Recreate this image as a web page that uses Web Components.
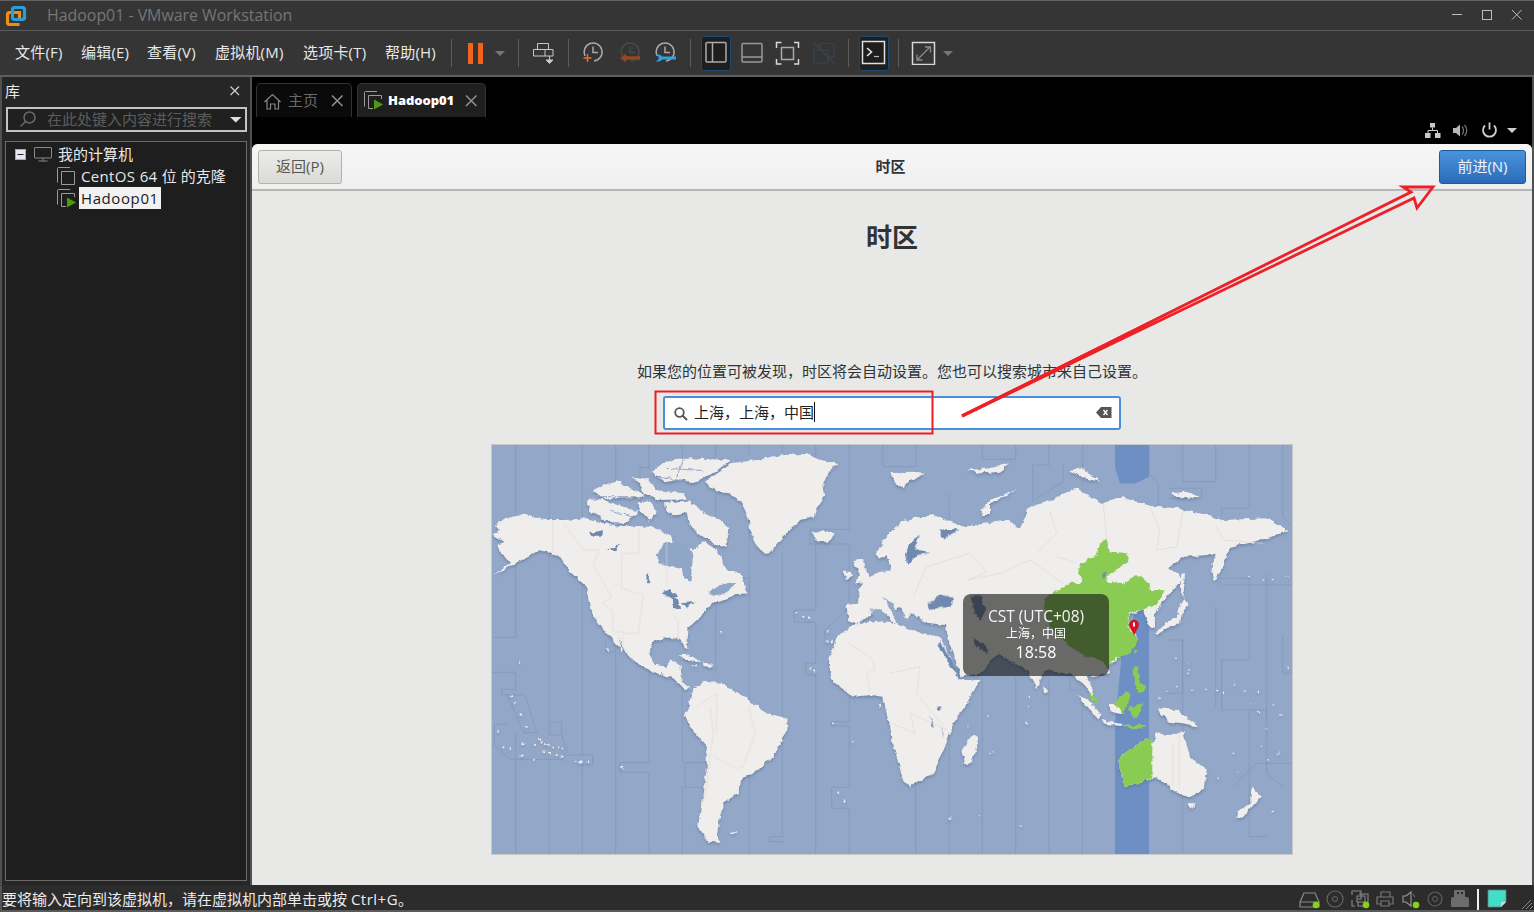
<!DOCTYPE html>
<html lang="zh"><head><meta charset="utf-8"><title>Hadoop01 - VMware Workstation</title>
<style>
html,body{margin:0;padding:0;background:#353535;overflow:hidden;width:1534px;height:912px}
body{font-family:"Open Sans","Noto Sans CJK SC",sans-serif}
</style></head><body>
<vm-window></vm-window>
<script>
const UI='"Open Sans","Noto Sans CJK SC",sans-serif';
const ico=(x,y,w,h,c)=>`<svg width="${w}" height="${h}" viewBox="${x} ${y} ${w} ${h}" fill="none">${c}</svg>`;
class Base extends HTMLElement{
  constructor(){super();this.attachShadow({mode:'open'}).innerHTML=`<style>${this.css()}</style>${this.html()}`;}
  css(){return ':host{display:block}'} html(){return ''}
}
class VmWindow extends Base{
  css(){return `:host{display:flex;flex-direction:column;position:relative;width:1534px;height:912px;background:#353535;overflow:hidden}
  .main{flex:1;display:flex;min-height:0;background:#505050;padding:0 2px 0 2px;gap:2px}
  .right{flex:1;display:flex;flex-direction:column;min-width:0;background:#000}
  .note{position:absolute;left:0;top:0;pointer-events:none}`}
  html(){return `<vm-titlebar></vm-titlebar><vm-toolbar></vm-toolbar>
  <div class="main"><vm-sidebar></vm-sidebar><div class="right"><vm-tabs></vm-tabs><vm-guest></vm-guest></div></div>
  <vm-statusbar></vm-statusbar>
  <svg class="note" width="1534" height="912" viewBox="0 0 1534 912" fill="none">
   <rect x="655.500" y="391.500" width="277" height="42" stroke="#ed1c24" stroke-width="2"/>
   <path d="M962 416 L1411 192 L1403 187 L1433 187 L1417 208 L1414 198 Z" stroke="#ee2027" stroke-width="2.800" stroke-linejoin="miter"/>
   <path d="M962 416 L1100 348" stroke="#ee2027" stroke-width="3.600"/>
  </svg>`}
}
class VmTitlebar extends Base{
  css(){return `:host{display:flex;align-items:center;height:29px;border-top:1px solid #636363;border-bottom:1px solid #5c5c5c;background:#353535;position:relative;flex:none}
  .logo{margin-left:5px;display:flex}.t{margin-left:20px;font:15.900px/20px ${UI};color:#767676;padding-bottom:2px}
  .c{margin-left:auto;display:flex}`}
  html(){return `<span class="logo">${ico(5,5,22,22,`
   <path d="M19.500 24.500h-10a2 2 0 0 1-2-2v-8a2 2 0 0 1 2-2H19.500V19.500" stroke="#f08c1a" stroke-width="3.200"/>
   <rect x="12.500" y="7.500" width="12" height="12" rx="2" stroke="#2a9fd6" stroke-width="3.200"/>`)}</span>
   <span class="t">Hadoop01 - VMware Workstation</span>
   <span class="c">${ico(1450,1,84,29,`
    <path d="M1452 14.500h10" stroke="#bdbdbd"/><rect x="1482.500" y="10.500" width="9" height="9" stroke="#bdbdbd"/>
    <path d="M1512 10l9.500 9.500M1521.500 10L1512 19.500" stroke="#bdbdbd"/>`)}</span>`}
}
class VmToolbar extends Base{
  css(){return `:host{display:flex;align-items:center;height:44px;background:#353535;border-bottom:2px solid #5e5e5e;flex:none;padding-left:15px;color:#e8e8e8}
  .menu{display:flex;gap:18px;width:436px;font:15px/20px ${UI};padding-bottom:3px;white-space:nowrap;letter-spacing:.2px}
  .menu span{display:block}
  .sep{width:1px;height:28px;background:#5c5c5c;flex:none}
  svg{flex:none;display:block}.hl{background:#1e1e1e;border:1px solid #1d4a70;border-radius:3px;box-sizing:border-box;height:35px;width:30px;display:flex}
  .i{display:flex;flex:none}`}
  html(){
   const clock=(cx,col)=>`<path d="M${cx-8} 56a9 9 0 1 1 9 5" stroke="${col}" stroke-width="1.500"/><path d="M${cx} 46.500v6h5" stroke="${col}" stroke-width="1.500"/>`;
   const items=[
    ['s',451],
    [466,ico(466,40,20,24,`<rect x="468" y="42" width="5" height="21" fill="#f0641e"/><rect x="478" y="42" width="5" height="21" fill="#f0641e"/>`)],
    [494,ico(494,48,12,8,`<path d="M495 50h10l-5 5z" fill="#777"/>`)],
    ['s',518],
    [532,ico(532,41,24,24,`<path d="M537.500 49v-5.500h11V49M533.500 49.500h19.500v6.500h-19.500zM545 49.500v6.500" stroke="#c8c8c8"/><path d="M549.500 56v4M546 60h7l-3.500 3.500z" stroke="#c8c8c8" fill="#c8c8c8"/>`)],
    ['s',568],
    [581,ico(581,41,24,24,clock(593,'#aaa')+`<path d="M587.500 54v8M583.500 58h8" stroke="#e8702a" stroke-width="1.500"/>`)],
    [618,ico(618,41,24,24,clock(630,'#4a4a4a')+`<path d="M625 58h15" stroke="#94481f" stroke-width="3.500"/><path d="M626 53.500v9l-6-4.500z" fill="#94481f"/>`)],
    [654,ico(654,41,24,24,clock(665,'#aaa')+`<path d="M662 58h14" stroke="#2ea3e0" stroke-width="3"/><path d="M655.500 54.500h3.500l3 1.500v4l-3 1.500h-3.500l3-2v-3z" fill="#2ea3e0"/>`)],
    ['s',690],
    [701,`<span class="hl">${ico(702,37,28,33,`<rect x="706" y="42.500" width="20" height="19.500" rx="1" stroke="#aaa" stroke-width="1.500"/><path d="M712.500 42.500V62" stroke="#aaa" stroke-width="1.500"/>`)}</span>`],
    [740,ico(740,40,24,24,`<rect x="742" y="42.500" width="20" height="18.500" rx="1" stroke="#999" stroke-width="1.500"/><path d="M742 56h20" stroke="#999" stroke-width="1.500"/>`)],
    [775,ico(775,40,25,24,`<path d="M776.500 47v-5.500h5M794 41.500h4.500V47M798.500 58v5h-4.500M781.500 63h-5v-5" stroke="#d8d8d8" stroke-width="1.500"/><rect x="781.500" y="46.500" width="12" height="12" stroke="#aaa" stroke-width="1.500"/>`)],
    [812,ico(812,40,24,24,`<path d="M820 49v-6.500h14V56h-6M814 49h14v13h-14z" stroke="#34424e" stroke-width="1.500"/><path d="M813 41l22 22" stroke="#3f4448" stroke-width="1.500"/>`)],
    ['s',848],
    [859,`<span class="hl">${ico(860,37,28,33,`<rect x="862.500" y="41.500" width="22" height="22" stroke="#e0e0e0" stroke-width="1.500"/><path d="M867 48l4.500 4-4.500 4" stroke="#e6e6e6" stroke-width="1.600"/><path d="M874 56.500h5" stroke="#bbb" stroke-width="1.200"/>`)}</span>`],
    ['s',898],
    [911,ico(911,40,25,24,`<rect x="912.500" y="41.500" width="22" height="22" stroke="#d8d8d8" stroke-width="1.500"/><path d="M917 59l13-13M925 46h5.500v5.500M917 53.500V59h5.500" stroke="#8a8a8a" stroke-width="1.300"/>`)],
    [942,ico(942,48,12,8,`<path d="M943 50h10l-5 5z" fill="#777"/>`)]
   ];
   const W={466:20,494:12,532:24,581:24,618:24,654:24,701:30,740:24,775:25,812:24,859:30,911:25,942:12};
   let pos=451,out='';
   for(const [a,b] of items){
     if(a==='s'){out+=`<span class="sep" style="margin-left:${b-pos}px"></span>`;pos=b+1;}
     else{out+=`<span class="i" style="margin-left:${a-pos}px">${b}</span>`;pos=a+W[a];}
   }
   return `<div class="menu"><span style="width:48px">文件(F)</span><span style="width:48px">编辑(E)</span><span style="width:50px">查看(V)</span><span style="width:70px">虚拟机(M)</span><span style="width:64px">选项卡(T)</span><span style="width:52px">帮助(H)</span></div>${out}`}
}
const vmIcon=(play)=>`<svg width="19" height="19" viewBox="0 0 19 19" fill="none"><path d="M.5 15.500V1.500a1 1 0 0 1 1-1H13" stroke="#9a9a9a"/><path d="M4.500 17.500V4.500H17.500V${play?8:17.5}${play?'':'H4.500'}M4.500 17.500H9" stroke="#9a9a9a"/>${play?`<path d="M10 8.500l9 5-9 5z" fill="#4f9a10"/>`:''}</svg>`;
class VmSidebar extends Base{
  css(){return `:host{display:flex;flex-direction:column;width:248px;background:#262626;flex:none;box-sizing:border-box;padding:0 0 4px 3px;color:#e8e8e8}
  .h{display:flex;align-items:center;justify-content:space-between;box-sizing:border-box;height:30px;font:15px/20px ${UI};padding:0 9px 3px 0}
  .s{display:flex;align-items:center;box-sizing:border-box;height:25px;width:241px;margin-left:1px;border:2px solid #c4c4c4;background:#202020;color:#5d5d5d;font:15px/20px ${UI};padding-left:10px}
  .s span{margin-left:9px;flex:1;padding-bottom:1px}.s svg{flex:none;margin-right:2px}
  .t{flex:1;margin:9px 0 0 0;width:242px;box-sizing:border-box;border:1px solid #6a6a6a;background:#1e1e1e;padding:1px 0 0 9px;font:15px/22px ${UI}}
  .r{display:flex;align-items:center;height:22px}
  .r svg{display:block;flex:none}.la{letter-spacing:.6px}.lb{letter-spacing:.35px}
  .sel{background:#f2f2f2;color:#1a1a1a;padding:0 2px;margin-left:3px}
  .ind{margin-left:42px;display:flex}`}
  html(){return `<div class="h"><span>库</span>${ico(229,85,12,12,`<path d="M230.500 86.500l8.500 8.500M239 86.500l-8.500 8.500" stroke="#d0d0d0" stroke-width="1.200"/>`)}</div>
  <div class="s">${ico(18,110,18,18,`<circle cx="29.500" cy="116.500" r="5.500" stroke="#6a6a6a" stroke-width="1.500"/><path d="M25.500 120.500l-5 5" stroke="#6a6a6a" stroke-width="1.500"/>`)}<span>在此处键入内容进行搜索</span>${ico(228,115,15,9,`<path d="M230 117h11.500l-5.700 5.500z" fill="#e0e0e0"/>`)}</div>
  <div class="t">
   <div class="r">${ico(15,150,11,11,`<rect x="15.500" y="150.500" width="10" height="10" fill="#e8e8f0" stroke="#aaa"/><path d="M17.500 155.500h6" stroke="#222"/>`)}
    <span style="margin-left:8px;display:flex">${ico(34,146,20,18,`<rect x="34.500" y="148.500" width="17" height="10.500" rx=".5" stroke="#8a8a8a"/><path d="M43 159v2.500M38.500 162h9" stroke="#8a8a8a"/>`)}</span>
    <span style="margin-left:4px">我的计算机</span></div>
   <div class="r"><span class="ind">${vmIcon(false)}</span><span style="margin-left:5px"><span class="lb">CentOS 64 </span>位 的克隆</span></div>
   <div class="r"><span class="ind">${vmIcon(true)}</span><span class="sel"><span class="la">Hadoop01</span></span></div>
  </div>`}
}
class VmTabs extends Base{
  css(){return `:host{display:block;height:67px;background:#000;flex:none;position:relative;box-sizing:border-box;padding:6px 0 0 4px}
  .row{display:flex;gap:5px;height:34px}
  .tab{display:flex;align-items:center;box-sizing:border-box;height:34px;border:1px solid #333;border-bottom:0;border-radius:5px 5px 0 0;font:15px/20px ${UI}}
  .home{width:96px;background:#0a0a0a;color:#6a6a6a;padding-left:6px}.home b{font-weight:400;margin-left:7px;padding-bottom:2px}
  .vm{width:129px;background:#1f1f1f;color:#fff;padding-left:6px;font:700 13px/18px ${UI}}
  .vm b{margin-left:5px;padding-bottom:2px;letter-spacing:-.05px}.tx{margin-left:auto;margin-right:7px;display:flex}
  .st{display:flex;align-items:center;justify-content:flex-end;height:19px;margin-top:4px;padding-right:12px}
  .st svg{display:block}`}
  html(){return `<div class="row"><div class="tab home">${ico(263,91,18,18,`<path d="M264.500 101l8-7.500 8 7.500M267 99v9h3.500v-5h4.500v5h3.500v-9" stroke="#888" stroke-width="1.200"/>`)}<b>主页</b>
   <span class="tx">${ico(330,93,14,14,`<path d="M332 94.500l10.500 10.500M342.500 94.500L332 105" stroke="#8f8f8f" stroke-width="1.600"/>`)}</span></div>
   <div class="tab vm">${vmIcon(true)}<b>Hadoop01</b><span class="tx">${ico(464,93,14,14,`<path d="M466 94.500l10.500 10.500M476.500 94.500L466 105" stroke="#8f8f8f" stroke-width="1.600"/>`)}</span></div></div>
   <div class="st">${ico(1424,121,96,19,`
    <rect x="1430" y="123" width="5" height="4.500" fill="#c8c8c8"/><rect x="1425" y="133" width="5.500" height="5" fill="#c8c8c8"/><rect x="1435" y="133" width="5.500" height="5" fill="#c8c8c8"/>
    <path d="M1432.500 127.500v3M1428 133v-2.500h9.500V133" stroke="#c8c8c8"/>
    <path d="M1453 128h3l4-3.500v12L1456 133h-3z" fill="#b8b8b8"/><path d="M1462 126.500c2 2 2 6 0 8M1464.500 125c3 3 3 8 0 11" stroke="#777" stroke-width="1.200"/>
    <path d="M1489.500 122.500v7" stroke="#cfcfcf" stroke-width="1.800"/><path d="M1485 125.500a6.500 6.500 0 1 0 9 0" stroke="#cfcfcf" stroke-width="1.800"/>
    <path d="M1507 128h10l-5 5z" fill="#cfcfcf"/>`)}</div>`}
}
class VmGuest extends Base{
  css(){return `:host{display:flex;flex-direction:column;flex:1;min-height:0;background:#e8e8e7;border-radius:6px 6px 0 0;overflow:hidden;color:#2e3436;font:15px/20px ${UI}}
  .bar{display:flex;align-items:center;justify-content:space-between;box-sizing:border-box;height:47px;padding:0 6px;background:linear-gradient(#f6f6f6,#efefef);border-bottom:2px solid #b6b6b3;flex:none;position:relative}
  .btn{box-sizing:border-box;height:34px;display:flex;align-items:center;justify-content:center;border-radius:3px;font:15px/20px ${UI};padding-bottom:2px}
  .back{width:84px;border:1px solid #b2b2ad;background:linear-gradient(#ececea,#dadad7);color:#555753}
  .next{width:87px;border:1px solid #1c5a9e;background:linear-gradient(#4b92dc,#2a6cb8);color:#eef4fb}
  .ttl{font-weight:700;font-size:15px;padding-bottom:2px}
  .body{flex:1;display:flex;flex-direction:column;align-items:center}
  h1{margin:28px 0 0;font:700 26px/36px ${UI};color:#333;height:36px}
  p{margin:106px 0 0;font:15px/20px ${UI};color:#2e3436}
  .search{display:flex;align-items:center;box-sizing:border-box;width:458px;height:34px;margin-top:15px;background:#fff;border:2px solid #4a90d9;border-radius:3px;padding:0 7px 0 8px;font:15px/20px ${UI};color:#222}
  .search .v{margin-left:6px;border-right:1px solid #111;height:20px;margin-bottom:2px}.search svg{display:block;flex:none}.search .e{margin-left:auto;display:flex}
  world-map{margin-top:14px}`}
  html(){return `<div class="bar"><div class="btn back">返回(P)</div><div class="ttl">时区</div><div class="btn next">前进(N)</div></div>
  <div class="body"><h1>时区</h1><p>如果您的位置可被发现，时区将会自动设置。您也可以搜索城市来自己设置。</p>
  <div class="search">${ico(672,405,15,15,`<circle cx="678.500" cy="411.500" r="4.300" stroke="#555" stroke-width="1.800"/><path d="M681.500 414.500l4.500 4.500" stroke="#555" stroke-width="2"/>`)}<span class="v">上海，上海，中国</span>
   <span class="e">${ico(1096,406,17,14,`<path d="M1097 412.500l5-5.500h10.500v11H1102z" fill="#555"/><path d="M1104.500 410l4 5M1108.500 410l-4 5" stroke="#fff" stroke-width="1.300"/>`)}</span></div>
  <world-map></world-map></div>`}
}
class WorldMap extends Base{
  css(){return `:host{display:block;position:relative;width:802px;height:411px;box-sizing:border-box;flex:none}
  svg{display:block;position:absolute;left:0;top:0}
  .tip{position:absolute;left:472px;top:150px;width:146px;height:82px;box-sizing:border-box;border-radius:8px;background:rgba(22,22,22,.62);color:#fff;text-align:center;padding-top:13px}
  .a{font:15.500px/18px ${UI};color:#f4f4f4}.b{font:12px/17px ${UI};margin-top:0}.c{font:16px/20px ${UI};margin-top:0}`}
  html(){
  const dots=(l,r=1.1)=>l.map(([x,y])=>`<circle cx="${x}" cy="${y}" r="${r*3}"/>`).join('');
  const rough=`<feTurbulence type="fractalNoise" baseFrequency=".16" numOctaves="3" seed="4" result="n"/><feDisplacementMap in="SourceGraphic" in2="n" scale="5" xChannelSelector="R" yChannelSelector="G" result="d"/>`;
  const region=`filterUnits="userSpaceOnUse" x="491" y="444" width="802" height="411"`;
  return `<svg width="802" height="411" viewBox="491 444 802 411">
  <defs>
  <filter id="land" ${region}>${rough}<feGaussianBlur in="d" stdDeviation="1.800" result="b"/><feOffset in="b" dy="1.500" result="o"/><feFlood flood-color="#566c90" flood-opacity=".55"/><feComposite in2="o" operator="in" result="s"/><feMerge><feMergeNode in="s"/><feMergeNode in="d"/></feMerge></filter>
  <filter id="rough" ${region}>${rough}</filter>
  </defs>
  <rect x="491" y="444" width="802" height="411" fill="#93a8c8"/>
  <path d="M1115 444h34v33l-14 6.500h-15l-5-16zM1149 655h-28v8l-6 60v132h34z" fill="#6e8fc4"/>
  <path d="M1135 610h14v50h-24z" fill="#6e8fc4"/>
  <g transform="translate(490,440) scale(.33333)" fill="none" stroke="#7f96b8" stroke-width="2">
   <path d="M5 592H77V15M178 15V847M277 15V235M277 400V945M377 15V180M377 600V1245M477 15V90M477 670V965M477 997V1245M577 15V60M577 750V968M577 1040V1245M677 15V60M677 160V700M778 15V45M778 210V1245M877 15V60M877 340V1190M977 15V60M977 270V510M977 547V670M977 705V1245M1078 15V268H960V312H1078V500L1005 570V612H1040M1078 770V845H1025V858H1078V1042H1025V1105H1078V1245M1178 15V80H1278V15"/>
   <path d="M5 697H77V748H35V765H105L140 878H100L52 765M77 878V1245M13 853H52M13 853V915L60 958H215L232 935L215 885V847H178V885H215M232 945H308V975H277V1245M178 960V1245"/>
   <path d="M347 603V635H377M388 968H477M388 968V997H477M585 968H655M585 968V1042H640M838 1190H877M838 1190V1205H885M913 510H977M913 510V547H977M947 670H977M947 670V705H977M755 415H778V465M450 82H477M450 82V230"/>
  </g>
  <g transform="translate(890,440) scale(.33333)" fill="none" stroke="#7f96b8" stroke-width="2">
   <path d="M378 58H277V15M377 15V60M477 15V75H428V183M520 75V125L428 183M578 15V140M778 15V100L805 130V200M878 15V100M977 15V125H878V100M1078 15V205H995V230M1178 15V230L1205 260M1078 415H975L1000 435H1205M1078 415V660H995V810H1130V1000L1178 1040M1130 400V830M835 600H878V760H830M878 600V1240M977 500V800M1078 810V1190H1130M1028 1040L1100 970H1205M277 710V1245M377 710V1245M477 710V1245M577 760V1245M178 160V1245M77 710V1245M1178 590V700H1205M540 710V750H578M835 145H935V175H835"/>
  </g>
  <g filter="url(#land)">
  <g transform="translate(490,440) scale(.33333)" fill="#f0eeed">
   <path d="M10 285L30 270L18 255L45 235L90 222L130 232L185 240L225 240L290 235L345 250L400 262L445 258L490 262L540 285L552 310L610 330L640 302L680 328L712 392L750 400L775 460L740 462L705 480L665 490L632 530L592 565L590 600L592 628L570 596L520 592L485 610L478 640L495 675L530 680L545 655L572 680L575 725L600 745L585 747L550 715L490 695L440 670L402 630L385 590L398 642L365 590L340 570L310 530L298 480L290 440L240 395L210 350L150 330L110 350L60 378L10 405L60 368L35 340L20 320L40 305Z"/>
   <path d="M645 125L690 95L720 70L800 60L880 45L950 42L985 58L1045 72L1020 90L1000 130L1005 165L985 195L975 230L930 240L880 290L840 340L820 340L795 310L780 265L775 230L755 190L720 160L680 155L660 140Z"/>
   <path d="M490 90L530 65L600 55L720 60L690 85L640 115L610 130L570 118L530 125L495 108Z"/>
   <path d="M425 110L470 115L500 150L580 160L590 178L500 180L460 160L450 130Z"/>
   <path d="M525 190L600 185L640 215L690 240L715 265L710 320L670 310L640 290L600 260L590 220L555 225L530 215Z"/>
   <path d="M290 180L335 178L400 200L445 215L400 250L370 250L345 240L300 215Z"/><path d="M310 150L340 135L395 120L400 135L430 150L460 165L450 172L400 172L350 178L320 165Z"/>
   <path d="M445 185L480 185L500 215L480 240L450 215Z"/><path d="M540 180L560 195L560 225L545 225Z"/>
   <path d="M965 280L1010 272L1035 285L1015 305L985 305Z"/>
   <path d="M1062 395L1085 395L1088 410L1065 420Z"/><path d="M1090 360L1115 355L1140 410L1135 425L1095 430L1110 405Z"/>
   <path d="M565 645L590 645L640 665L605 665ZM640 668L672 672L660 680L640 678ZM605 675L620 675L620 680Z"/>
   <path d="M610 745L650 722L700 730L745 760L790 790L830 820L892 835L892 870L860 935L810 985L750 1020L745 1060L700 1090L690 1130L680 1190L692 1208L655 1205L625 1160L635 1080L650 990L650 920L600 860L585 825L600 790Z"/>
   <path d="M720 1178L740 1176L740 1182L722 1182Z"/>
   ${dots([[64,772],[78,787],[92,826],[110,861],[22,873],[40,922],[60,928],[95,948],[130,958],[100,910],[135,918],[160,935],[180,940],[200,945],[215,950],[155,905],[165,912],[175,915],[150,897],[190,925],[205,920],[218,925],[257,963],[272,965],[296,966],[354,629],[397,985],[1045,1058],[1063,1082],[1088,907],[1030,852],[695,576],[919,522],[940,527],[957,533],[1014,573],[1010,605],[1025,605],[90,665],[960,688],[972,692],[1170,798]])}
  </g>
  <g transform="translate(890,440) scale(.33333)" fill="#f0eeed">
   <path d="M-130 495L-125 540L-100 548L-60 525L-25 510L-5 530L20 555L30 540L5 510L30 505L50 540L65 520L110 548L165 555L170 590L215 710L270 700L325 640L340 650L410 690L440 745L465 690L540 700L585 735L620 790L590 710L660 700L655 680L700 640L745 600L720 560L715 525L760 510L775 555L795 560L795 520L830 470L875 420L860 400L835 385L880 350L950 345L978 338L965 385L975 425L1000 370L1020 320L1100 305L1195 272L1130 235L1000 240L870 205L790 200L690 170L640 190L560 145L460 190L420 200L390 265L360 240L220 260L130 225L40 240L-20 300L-40 340L-30 360L-10 345L5 395L-30 395L-70 410L-95 450L-95 490Z"/>
   <path d="M0 545L80 575L150 590L215 720L270 720L230 790L190 850L165 920L130 1000L60 1040L40 1020L5 900L-10 820L-20 770L-60 765L-110 770L-170 725L-185 680L-180 650L-160 590L-100 550L-60 545Z"/>
   <path d="M250 885L265 895L245 970L222 972L215 930Z"/>
   <path d="M685 960L720 930L770 895L790 905L800 880L840 885L880 875L900 950L950 990L945 1040L905 1070L870 1065L840 1040L800 1015L770 1020L700 1040L695 1010Z"/>
   <path d="M893 1090L915 1090L905 1110Z"/><path d="M1085 1040L1115 1070L1090 1095L1060 1130L1040 1135L1040 1120L1080 1090Z"/>
   <path d="M795 580L830 550L860 530L870 500L880 475L895 495L875 520L870 550L830 565L800 585Z"/><path d="M875 400L885 400L880 470L870 450Z"/>
   <path d="M460 737L472 755L462 760Z"/><path d="M562 762L590 775L635 825L625 838L590 800Z"/><path d="M632 840L695 852L690 858L640 850Z"/>
   <path d="M655 795L695 795L690 822L665 815Z"/><path d="M800 805L860 810L925 860L880 850L840 845L815 825Z"/>
   <path d="M270 210L300 180L385 145L350 165L300 190L300 225L280 225ZM415 205L470 195L440 225L420 275L400 270ZM0 100L60 95L105 98L60 120L40 145L15 125ZM230 90L300 85L360 70L330 95L270 100ZM535 90L580 85L630 125L585 115ZM840 160L890 155L930 170L880 175Z"/>
   ${dots([[895,670],[897,690],[895,700],[415,770],[415,800],[298,828],[235,860],[408,848],[300,938],[310,935],[180,1135],[265,1128],[390,1155],[1195,685],[855,658],[860,740],[905,748],[945,745],[980,752],[1000,757],[1035,735],[1065,750],[1105,757],[1085,790],[1105,815],[1150,795],[1170,825],[1130,868],[1115,920],[1135,960],[1165,940],[1030,940],[985,1015],[1048,997],[1150,1112],[1080,410],[1120,420],[1150,418],[1190,410],[810,775],[830,750]],.8)}
  </g>
  </g>
  <g filter="url(#rough)">
  <g transform="translate(490,440) scale(.33333)" stroke="#93a8c8" stroke-width="3" fill="none"><path d="M505 112L600 125M530 85L640 92M580 60L560 110M440 170L300 170M360 210L440 235"/></g>
  <g transform="translate(490,440) scale(.33333)">
   <path d="M497 345L530 305L590 310L610 345L605 385L602 422L585 418L578 385L530 375L505 365Z" fill="#90a6c7"/>
   <g fill="#6f89ae"><path d="M515 460L540 447L565 470L545 475ZM545 470L565 480L570 505L548 505ZM575 490L618 485L590 503ZM470 400L482 430L472 430L465 405ZM300 280L340 270L330 290L310 290ZM350 330L395 312L375 330Z"/></g>
   <path d="M655 460L690 435L735 425L720 450L690 468Z" fill="#90a6c7"/>
  </g>
  <g transform="translate(890,440) scale(.33333)" fill="#6f89ae">
   <path d="M115 490L150 465L190 470L185 500L140 505L120 510Z"/><path d="M240 465L275 465L285 510L270 545L255 520Z"/>
   <path d="M45 345L65 300L90 285L72 325L122 340L80 345L52 375Z"/><path d="M145 268L205 268L160 298Z"/>
   <path d="M248 592L280 612L300 640L275 632L255 615Z"/><path d="M148 600L215 712L205 715L145 615Z"/><path d="M120 825L135 860L125 855ZM155 860L160 890L155 890ZM140 800L155 800L145 815Z"/>
   <path d="M-20 470L10 495L50 540L70 525L90 545L100 575L20 550Z" fill="#93a8c8"/><path d="M-60 510L-25 505L-10 530L-40 540Z" fill="#93a8c8"/>
  </g>
  </g>
  <g transform="translate(490,440) scale(.33333)" fill="none" stroke="#dcd9d7" stroke-width="2">
   <path d="M188 240V335L215 350M220 250L280 330H327L310 375L365 470L338 490L368 510V575H400L400 620L430 665M395 340V445L460 465L445 580H400M448 262V340H395M530 310V440M545 520L565 545V600M660 800L670 880L660 950L650 1040L635 1100M775 800L795 880L760 980L740 985L670 950M620 800L680 760V880M1070 605L1150 660L1155 690L1130 700L1140 760"/>
  </g>
  <g transform="translate(890,440) scale(.33333)" fill="none" stroke="#dcd9d7" stroke-width="2">
   <path d="M240 340L290 395L235 420L330 400L420 360L520 430M500 350L560 370M70 470L110 380L240 340M640 190L650 300M780 200L810 270L800 330L860 320L880 210M980 260L1000 300L1120 310M440 340L500 280L480 215M0 700L90 680L80 760L170 870L130 850L60 820L75 880L5 850M848 915V1040M868 1040V880"/>
  </g>
  <g filter="url(#rough)">
  <g transform="translate(890,440) scale(.33333)" fill="#8acc52">
   <path d="M495 455L540 428L580 430L565 395L575 370L620 345L630 310L650 298L660 335L700 338L720 350L712 370L650 405L650 425L700 430L730 410L760 405L785 450L825 450L800 490L760 510L725 515L712 530L720 570L745 600L720 640L665 660L655 690L630 660L590 650L540 620L480 560L460 480Z"/>
   <path d="M685 960L720 930L770 895L787 903L787 1015L770 1020L700 1040L695 1010Z"/>
   <path d="M668 795L700 760L720 755L715 790L695 825L680 795Z"/><path d="M720 800L760 790L745 835L725 830Z"/><path d="M730 675L745 680L748 720L770 745L745 760L735 730Z"/><path d="M730 630L742 630L735 648Z"/><path d="M597 755L615 770L622 790L605 785Z"/><path d="M690 855L775 855L750 865L710 862Z"/>
   <path d="M650 658L666 660L660 678L650 672Z"/>
   <path d="M640 405L655 385L640 420Z" fill="#6f89ae"/>
  </g>
  </g>
  <path d="M1134 620c-3 0-4.500 2.200-4.500 4.800 0 3 3 6 4.500 10 1.500-4 4.500-7 4.500-10 0-2.600-1.500-4.800-4.500-4.800z" fill="#e3101c" stroke="#a80d14" stroke-width=".5"/><rect x="1133" y="622.500" width="2" height="4" fill="#fff"/>
  <rect x="491.500" y="444.500" width="801" height="410" fill="none" stroke="#c8c8c6"/>
  </svg>
  <div class="tip"><div class="a">CST (UTC+08)</div><div class="b">上海，中国</div><div class="c">18:58</div></div>`}
}
class VmStatusbar extends Base{
  css(){return `:host{display:flex;align-items:flex-start;justify-content:space-between;height:27px;box-sizing:border-box;flex:none;background:#2c2c2c;border-top:1px solid #2c2c2c;border-left:2px solid #555;border-bottom:2px solid #5a5a5a;color:#ececec;font:15px/26px ${UI}}
  span{white-space:nowrap}svg{display:block}i{font-style:normal;letter-spacing:.5px}`}
  html(){const dot=(x,y)=>`<circle cx="${x}" cy="${y}" r="3.300" fill="#86d11a"/>`;const c='#8a8a8a';
  return `<span>要将输入定向到该虚拟机，请在虚拟机内部单击或按 <i>Ctrl+G</i>。</span>${ico(1296,886,238,24,`
  <path d="M1304 893h11l4 9v5h-19v-5zM1300 902h19" stroke="${c}" stroke-width="1.200"/>${dot(1316,905)}
  <circle cx="1335" cy="899" r="8" stroke="#666" stroke-width="1.200"/><circle cx="1335" cy="899" r="2.500" stroke="#666"/>
  <path d="M1352 895v-4h9v8h-4M1359 894h9v8h-4M1352 900v6h3M1358 902v4h5" stroke="${c}" stroke-width="1.100"/><rect x="1357" y="896" width="8" height="6" stroke="${c}"/>${dot(1366,905)}
  <path d="M1381 897v-5h9v5M1381 904h-4v-7h16v7h-4M1381 901h8v5h-8z" stroke="#777" stroke-width="1.200"/>
  <path d="M1403 896h3l5-4v14l-5-4h-3z" stroke="#999" stroke-width="1.100"/><path d="M1413 894l2 3" stroke="#777"/>${dot(1416,905)}
  <circle cx="1435" cy="899" r="7" stroke="#606060" stroke-width="1.200"/><circle cx="1435" cy="899" r="2.500" stroke="#606060"/>
  <path d="M1454 897v-6a1 1 0 0 1 1-1h9a1 1 0 0 1 1 1v6h2a2 2 0 0 1 2 2v7a1 1 0 0 1-1 1h-16a1 1 0 0 1-1-1v-7a2 2 0 0 1 2-2z" fill="#6c6c6c"/><rect x="1457" y="892" width="2" height="2" fill="#2c2c2c"/><rect x="1461" y="892" width="2" height="2" fill="#2c2c2c"/>
  <rect x="1477" y="889" width="2" height="21" fill="#eee"/>
  <path d="M1488 890h18v12l-5 5h-13z" fill="#3fe0c8" stroke="#777" stroke-width=".8"/><path d="M1506 902h-5v5z" fill="#cfd8d8"/>
  <path d="M1522 909l9-9M1526 909l6-6M1530 909l3-3" stroke="#888"/>`)}`}
}
customElements.define('vm-titlebar',VmTitlebar);customElements.define('vm-toolbar',VmToolbar);customElements.define('vm-sidebar',VmSidebar);
customElements.define('vm-tabs',VmTabs);customElements.define('world-map',WorldMap);customElements.define('vm-guest',VmGuest);
customElements.define('vm-statusbar',VmStatusbar);customElements.define('vm-window',VmWindow);
</script>
</body></html>
